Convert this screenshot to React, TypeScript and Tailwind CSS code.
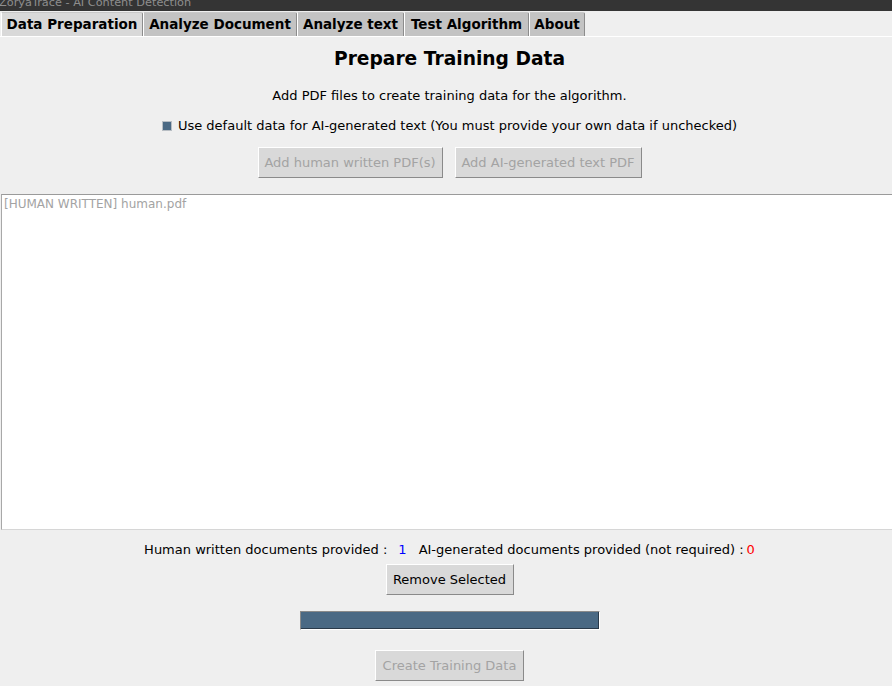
import React from "react";

const font = { fontFamily: '"DejaVu Sans", "Liberation Sans", sans-serif' };

function Btn({ label, w, disabled }: { label: string; w: string; disabled?: boolean }) {
  return (
    <div
      className={`${w} h-[31px] flex items-center justify-center bg-[#d9d9d9] border border-t-white border-l-white border-r-[#8a8a8a] border-b-[#8a8a8a] text-[13px] ${
        disabled ? "text-[#a3a3a3]" : "text-black"
      }`}
    >
      {label}
    </div>
  );
}

export default function App() {
  const tabs = [
    { label: "Data Preparation", w: "w-[142px]", sel: true },
    { label: "Analyze Document", w: "w-[154px]" },
    { label: "Analyze text", w: "w-[107px]" },
    { label: "Test Algorithm", w: "w-[125px]" },
    { label: "About", w: "w-[56px]" },
  ];
  return (
    <div className="w-[892px] h-[686px] overflow-hidden bg-[#efefef]" style={font}>
      <div className="w-[899px] flex flex-col">
        {/* title bar */}
        <div className="h-[11px] bg-[#343434] overflow-hidden">
          <div className="-mt-[3px] -ml-[1px] text-[11.3px] leading-[11px] text-[#8e8e8e] whitespace-nowrap">
            ZoryaTrace - AI Content Detection
          </div>
        </div>
        {/* tabs */}
        <div className="h-[25px] flex items-end pl-[1px]">
          {tabs.map((t) => (
            <div
              key={t.label}
              className={`${t.w} h-[24px] flex items-center justify-center font-bold text-[13.5px] text-black border-l border-t border-r border-l-white border-t-[#c8c8c8] border-r-[#8c8c8c] rounded-tr-[2px] ${
                t.sel ? "bg-[#d9d9d9]" : "bg-[#c3c3c3]"
              }`}
            >
              {t.label}
            </div>
          ))}
        </div>
        <div className="h-px bg-white" />
        {/* title */}
        <div className="mt-[11px] h-[22px] leading-[22px] text-center font-bold text-[18.67px] text-black">
          Prepare Training Data
        </div>
        <div className="mt-[18px] h-[16px] leading-[16px] text-center text-[13px] text-black">
          Add PDF files to create training data for the algorithm.
        </div>
        <div className="mt-[14px] h-[16px] flex items-center justify-center gap-[6px] text-[13px] leading-[16px] text-black">
          <div className="w-[10px] h-[10px] bg-[#4a6984] border border-[#b8bec4]" />
          <span>Use default data for AI-generated text (You must provide your own data if unchecked)</span>
        </div>
        <div className="mt-[13px] flex justify-center gap-[12px]">
          <Btn label="Add human written PDF(s)" w="w-[185px]" disabled />
          <Btn label="Add AI-generated text PDF" w="w-[187px]" disabled />
        </div>
        {/* listbox */}
        <div className="mt-[16px] ml-[1px] h-[336px] bg-white border-t border-l border-b border-t-[#9a9a9a] border-l-[#a8a8a8] border-b-[#d6d6d6]">
          <div className="pl-[2px] pt-[2px] text-[12px] leading-[15px] text-[#a3a3a3]">
            [HUMAN WRITTEN] human.pdf
          </div>
        </div>
        {/* counts */}
        <div className="mt-[12px] h-[16px] flex justify-center text-[13px] leading-[16px] text-black">
          <span>Human written documents provided :</span>
          <span className="ml-[11px] mr-[12px] text-[#0000ff]">1</span>
          <span>AI-generated documents provided (not required) :</span>
          <span className="ml-[3px] text-[#ff0000]">0</span>
        </div>
        <div className="mt-[6px] flex justify-center">
          <Btn label="Remove Selected" w="w-[128px]" />
        </div>
        <div className="mt-[16px] flex justify-center">
          <div className="w-[300px] h-[19px] border border-t-[#8a8a8a] border-l-[#8a8a8a] border-r-white border-b-white">
            <div className="w-full h-full bg-[#4a6984] border-b border-r border-b-[#2a3a4a] border-r-[#2a3a4a]" />
          </div>
        </div>
        <div className="mt-[20px] flex justify-center">
          <Btn label="Create Training Data" w="w-[149px]" disabled />
        </div>
      </div>
    </div>
  );
}
